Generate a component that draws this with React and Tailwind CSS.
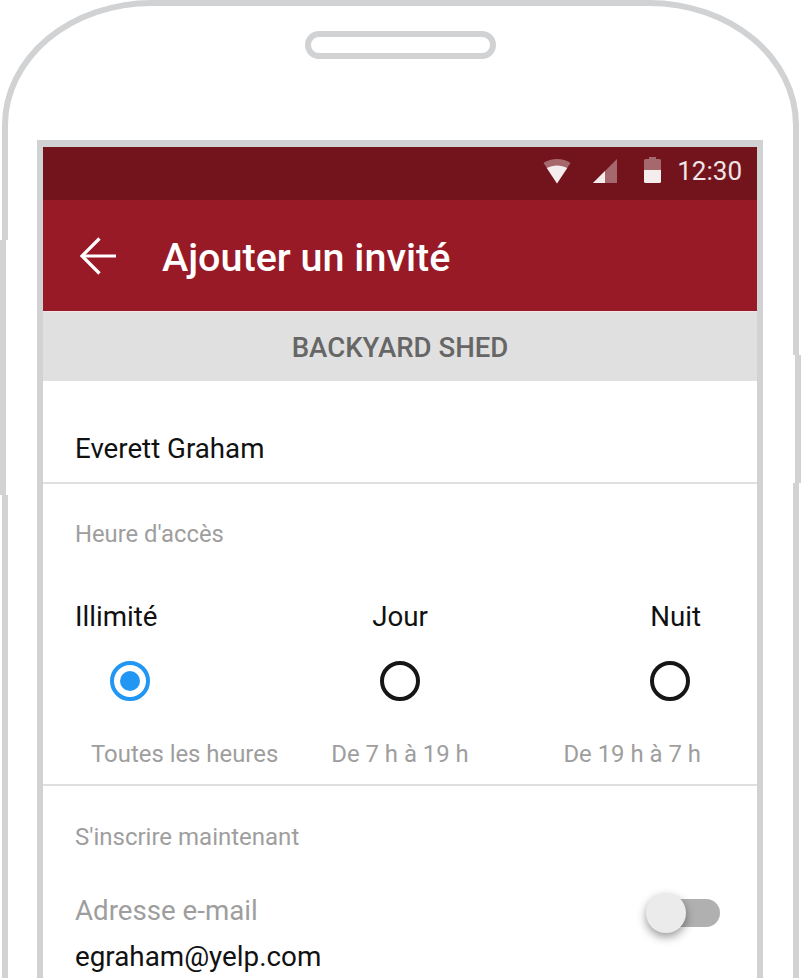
const roboto = "font-['Roboto',sans-serif]";

function WifiIcon() {
    return (
        <svg width="28" height="26" viewBox="0 0 28 26" className="block">
            <path d="M14 25.5 L0.5 5 C8 -0.5 20 -0.5 27.5 5 Z" fill="#f1e7e8" fillOpacity="0.4" />
            <path d="M14 25.5 L3.8 10 C10 6.5 18 6.5 24.2 10 Z" fill="#f4eced" />
        </svg>
    );
}

function SignalIcon() {
    return (
        <svg width="24" height="24" viewBox="0 0 24 24" className="block">
            <path d="M24 0 V24 H0 Z" fill="#f1e7e8" fillOpacity="0.4" />
            <path d="M12 12 V24 H0 Z" fill="#f4eced" />
        </svg>
    );
}

function BatteryIcon() {
    return (
        <svg width="17" height="26" viewBox="0 0 17 26" className="block">
            <path d="M5 0 H12 V2 H15.5 A1.5 1.5 0 0 1 17 3.5 V13 H0 V3.5 A1.5 1.5 0 0 1 1.5 2 H5 Z" fill="#f1e7e8" fillOpacity="0.4" />
            <path d="M0 13 H17 V24.5 A1.5 1.5 0 0 1 15.5 26 H1.5 A1.5 1.5 0 0 1 0 24.5 Z" fill="#f4eced" />
        </svg>
    );
}

function Radio({ checked }) {
    return (
        <div className={`w-10 h-10 rounded-full border-[4px] flex items-center justify-center ${checked ? 'border-[#2196f3]' : 'border-[#161616]'}`}>
            {checked && <div className="w-5 h-5 rounded-full bg-[#2196f3]" />}
        </div>
    );
}

export default function App() {
    return (
        <div className={`relative w-[801px] h-[978px] overflow-hidden bg-white ${roboto}`}>
            {/* phone body */}
            <div className="ml-[2px] w-[797px] h-[1100px] border-[6px] border-[#d1d2d4] rounded-tl-[150px_125px] rounded-tr-[150px_125px] bg-white pt-[25px]">
                <div className="ml-[297px] w-[191px] h-7 rounded-full border-[6px] border-[#d1d2d4]" />

                {/* screen */}
                <div className="ml-[29px] mt-[81px] w-[726px] h-[1000px] border-[6px] border-t-[7px] border-[#d1d2d4] bg-white">
                    <div className="h-[53px] pb-[6px] bg-[#73141c] flex items-center justify-end pr-[15px]">
                        <WifiIcon />
                        <div className="ml-[22px]"><SignalIcon /></div>
                        <div className="ml-[27px] -mt-[2px]"><BatteryIcon /></div>
                        <span className="ml-[16px] text-[26px] leading-none text-[#f0e5e6]">12:30</span>
                    </div>
                    <div className="h-[112px] bg-[#981a26] border-b border-b-[#f3e6e7] flex items-center pl-[36px]">
                        <svg width="38" height="40" viewBox="0 0 38 40" fill="none" stroke="white" strokeWidth="3.2" className="block">
                            <path d="M37 20 H3" />
                            <path d="M20.5 2.5 L3 20 L20.5 37.5" />
                        </svg>
                        <h1 className="ml-[45px] mt-[4px] text-[39.5px] font-medium text-white leading-none">Ajouter un invité</h1>
                    </div>
                    <div className="h-[69px] pt-[2px] bg-[#e0e0e0] flex items-center justify-center text-[27.6px] font-medium text-[#666666]">
                        BACKYARD SHED
                    </div>

                    <div className="h-[103px] border-b-2 border-[#e0e0e0] pl-[32px] pt-[52px] text-[27.7px] leading-[32px] text-[#111]">
                        Everett Graham
                    </div>

                    <div className="h-[302px] border-b-2 border-[#e0e0e0]">
                        <div className="pl-[32px] pt-[36px] text-[23.8px] leading-[28px] text-[#9e9e9e]">Heure d'accès</div>
                        <div className="mt-[53px] px-[32px] grid grid-cols-3 text-[27.7px] leading-[32px] text-[#111]">
                            <span>Illimité</span>
                            <span className="text-center">Jour</span>
                            <span className="text-right pr-[24px]">Nuit</span>
                        </div>
                        <div className="mt-[28px] px-[67px] flex justify-between">
                            <Radio checked />
                            <Radio />
                            <Radio />
                        </div>
                        <div className="mt-[39px] px-[32px] grid grid-cols-3 text-[23.9px] leading-[28px] text-[#9e9e9e]">
                            <span className="pl-[16px] whitespace-nowrap">Toutes les heures</span>
                            <span className="text-center">De 7 h à 19 h</span>
                            <span className="text-right pr-[24px]">De 19 h à 7 h</span>
                        </div>
                    </div>

                    <div className="pl-[32px] pt-[37px] text-[24px] leading-[28px] text-[#9e9e9e]">S'inscrire maintenant</div>
                    <div className="mt-[44px] pl-[32px] pr-[37px] flex items-start justify-between">
                        <div>
                            <div className="text-[27.7px] leading-[32px] text-[#9e9e9e]">Adresse e-mail</div>
                            <div className="mt-[14px] text-[27.8px] leading-[32px] text-[#111]">egraham@yelp.com</div>
                        </div>
                        <div className="relative w-[74px] h-[40px] -mt-[2px]">
                            <div className="absolute right-0 top-[6px] w-[60px] h-[28px] rounded-full bg-[#b0b0b0]" />
                            <div className="absolute left-0 top-0 w-[40px] h-[40px] rounded-full bg-[#ebebeb] shadow-[0_4px_10px_rgba(0,0,0,0.4)]" />
                        </div>
                    </div>
                </div>
            </div>

            {/* side buttons */}
            <div className="absolute left-0 top-[240px] w-[8px] h-[255px] bg-[#d1d2d4] border-r-2 border-white" />
            <div className="absolute right-0 top-[355px] w-[8px] h-[128px] bg-[#d1d2d4] border-l-2 border-white" />
        </div>
    );
}
